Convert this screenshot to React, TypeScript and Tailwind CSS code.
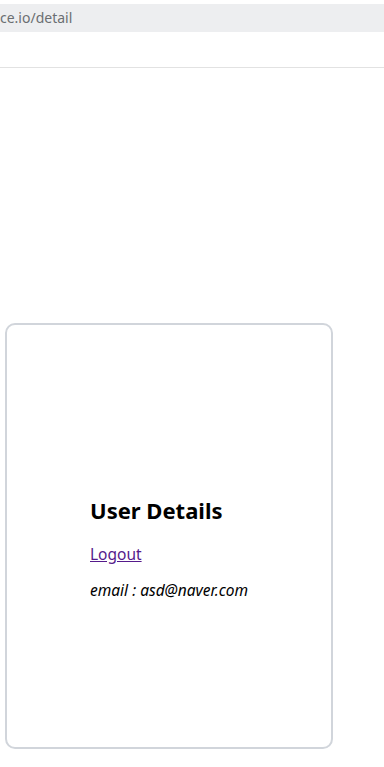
export default function App() {
  return (
    <div className="w-[384px] h-[767px] bg-white overflow-hidden flex flex-col" style={{ fontFamily: '"Noto Sans", "Open Sans", sans-serif' }}>
      <div className="h-[4px]" />
      <div className="h-[28px] bg-[#edeef0] flex items-center">
        <span className="text-[14px] text-[#6b6e72] leading-none">ce.io/detail</span>
      </div>
      <div className="h-[36px] border-b border-[#e2e2e2]" />
      <div className="h-[255px]" />
      <div className="ml-[5px] w-[328px] h-[426px] border-2 border-[#d1d5db] rounded-[10px] flex flex-col pl-[83px] pt-[171px]">
        <h1 className="text-[22px] font-bold text-black leading-[28px] m-0">User Details</h1>
        <a href="#" className="text-[15.5px] text-[#551a8b] underline mt-[19px] leading-[22px] w-fit">Logout</a>
        <p className="text-[15.5px] italic text-black mt-[14px] leading-[22px]">email : asd@naver.com</p>
      </div>
    </div>
  );
}
